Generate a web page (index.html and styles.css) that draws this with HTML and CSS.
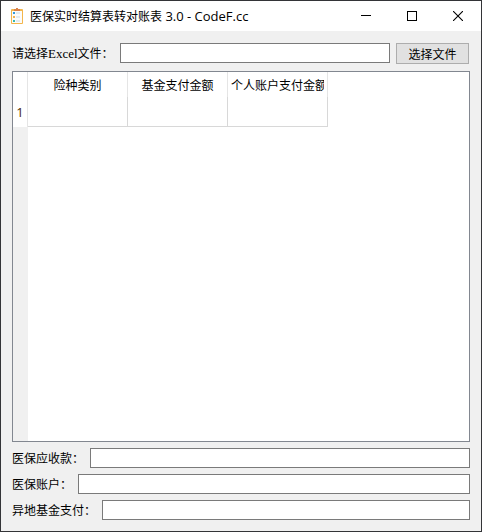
FILE: index.html
```html
<!DOCTYPE html>
<html lang="zh-CN">
<head>
    <meta charset="UTF-8">
    <meta name="viewport" content="width=device-width, initial-scale=1.0">
    <title>医保实时结算表转对账表 3.0 - CodeF.cc</title>
    <link rel="stylesheet" href="styles.css">
</head>
<body>
    <div class="ventana">
        <header class="titulo">
            <svg class="icono" width="16" height="16" viewBox="0 0 16 16">
                <rect x="2" y="1" width="12" height="15" rx="1" fill="#f3b64c"/>
                <rect x="3" y="3" width="10" height="12" fill="#fbfbfb"/>
                <rect x="5" y="1" width="6" height="2" fill="#d9824b"/>
                <rect x="7" y="0" width="2" height="1" fill="#d9824b"/>
                <rect x="4" y="4" width="2" height="2" fill="#2f9be0"/>
                <rect x="4" y="8" width="2" height="2" fill="#f0b050"/>
                <rect x="4" y="12" width="2" height="2" fill="#35b9ad"/>
                <path d="M7 5h4M7 9h4M7 13h4" stroke="#ccd9e4"/>
            </svg>
            <h1>医保实时结算表转对账表<span class="version"> 3.0 - CodeF.cc</span></h1>
            <button class="control" aria-label="最小化">
                <svg width="10" height="10" viewBox="0 0 10 10" shape-rendering="crispEdges"><path d="M0 4.5h10" stroke="#000"/></svg>
            </button>
            <button class="control" aria-label="最大化">
                <svg width="10" height="10" viewBox="0 0 10 10" shape-rendering="crispEdges"><path d="M.5.5h9v9h-9z" fill="none" stroke="#000"/></svg>
            </button>
            <button class="control" aria-label="关闭">
                <svg width="10" height="10" viewBox="0 0 10 10"><path d="M0 0l10 10M10 0L0 10" stroke="#000" stroke-width="1.1"/></svg>
            </button>
        </header>
        <main class="contenido">
            <div class="fila archivo">
                <label for="archivo">请选择<span class="latino">Excel</span>文件：</label>
                <input type="text" id="archivo">
                <button class="boton">选择文件</button>
            </div>
            <div class="tabla-container">
                <table>
                    <thead>
                        <tr>
                            <th class="numero"></th>
                            <th><div class="columna">险种类别</div></th>
                            <th><div class="columna">基金支付金额</div></th>
                            <th><div class="columna">个人账户支付金额</div></th>
                        </tr>
                    </thead>
                    <tbody>
                        <tr>
                            <th class="numero">1</th>
                            <td></td>
                            <td></td>
                            <td></td>
                        </tr>
                    </tbody>
                </table>
                <div class="relleno"></div>
            </div>
            <div class="fila">
                <label for="cobro">医保应收款：</label>
                <input type="text" id="cobro">
            </div>
            <div class="fila">
                <label for="cuenta">医保账户：</label>
                <input type="text" id="cuenta">
            </div>
            <div class="fila">
                <label for="fondo">异地基金支付：</label>
                <input type="text" id="fondo">
            </div>
        </main>
    </div>
</body>
</html>
```
FILE: styles.css
```css
* {
    box-sizing: border-box;
}

body {
    margin: 0;
    font-family: "Noto Sans CJK SC", sans-serif;
    font-size: 12px;
    color: #000;
}

.ventana {
    display: flex;
    flex-direction: column;
    height: 100vh;
    background: #f0f0f0;
    border: 1px solid #333437;
}

.titulo {
    display: flex;
    align-items: center;
    height: 30px;
    padding-left: 8px;
    background: #fff;
}

.titulo h1 {
    flex: 1;
    margin: 0 0 0 5px;
    font-size: 12px;
    font-weight: normal;
    line-height: 18px;
    white-space: nowrap;
}

.version {
    font-family: "Open Sans", sans-serif;
    font-size: 13px;
}

.control {
    display: flex;
    align-items: center;
    justify-content: center;
    width: 46px;
    height: 28px;
    padding: 0;
    border: none;
    background: #fff;
}

.contenido {
    flex: 1;
    display: flex;
    flex-direction: column;
    gap: 6px;
    padding: 12px 11px 11px;
}

.fila {
    display: flex;
    gap: 6px;
    height: 20px;
    line-height: 20px;
}

.archivo {
    align-items: flex-start;
    height: 22px;
    padding-right: 1px;
}

label {
    white-space: nowrap;
}

.latino {
    font-family: "Liberation Serif", serif;
    font-size: 13px;
}

.fila input {
    flex: 1;
    min-width: 0;
    height: 20px;
    padding: 0 4px;
    border: 1px solid #7a7a7a;
    background: #fff;
    font: inherit;
}

.boton {
    width: 73px;
    height: 21px;
    padding: 0;
    border: 1px solid #adadad;
    background: #e1e1e1;
    color: #000;
    font: inherit;
    line-height: 18px;
}

.tabla-container {
    flex: 1;
    display: flex;
    flex-direction: column;
    border: 1px solid #828790;
    background: #fff;
}

table {
    width: 315px;
    table-layout: fixed;
    border-collapse: separate;
    border-spacing: 0;
}

th, td {
    width: 100px;
    padding: 0 3px;
    border-right: 1px solid #d8d8d8;
    font-weight: normal;
}

th {
    height: 25px;
    border-color: #e5e5e5;
    line-height: 22px;
}

td {
    height: 30px;
    border-bottom: 1px solid #d8d8d8;
}

.columna {
    overflow: hidden;
    white-space: nowrap;
}

.numero {
    width: 15px;
    padding: 0;
    color: #4a2800;
    font-family: "Open Sans", sans-serif;
    font-size: 13px;
}

.relleno {
    flex: 1;
    width: 15px;
    background: #f0f0f0;
}
```
